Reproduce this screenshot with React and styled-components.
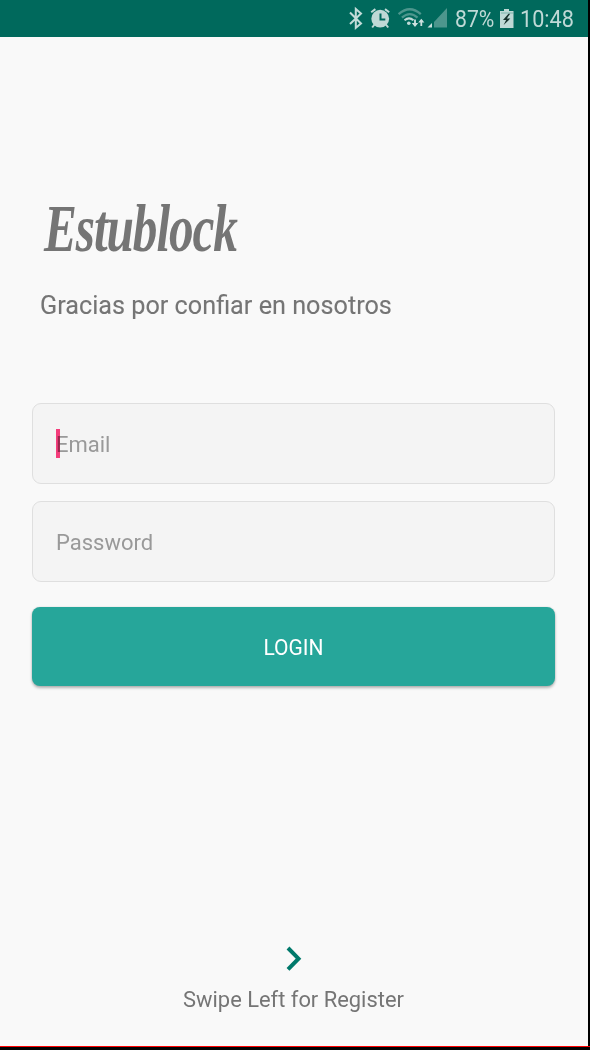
import React from "react";
import styled, { createGlobalStyle } from "styled-components";

const GlobalStyle = createGlobalStyle`
  * { box-sizing: border-box; }
  body { margin: 0; background: #000; font-family: Roboto, "Liberation Sans", sans-serif; }
`;

const Frame = styled.div`
  width: 590px;
  height: 1050px;
  background: #000;
  overflow: hidden;
`;

const Screen = styled.div`
  width: 588px;
  height: 1046px;
  background: #f9f9f9;
  display: flex;
  flex-direction: column;
`;

const BottomEdge = styled.div`
  height: 1px;
  background: #f00;
`;

const StatusBar = styled.header`
  height: 37px;
  flex: none;
  background: #00695c;
  color: #bfd9d6;
  display: flex;
  justify-content: flex-end;
`;

const StatusIcons = styled.svg`
  flex: none;
  display: block;
`;

const StatusText = styled.span`
  width: ${(p) => p.$width}px;
  font-size: 24.5px;
  line-height: 37px;
  white-space: nowrap;
  transform: scaleX(${(p) => p.$stretch});
  transform-origin: left;
`;

const Main = styled.main`
  flex: 1;
  display: flex;
  flex-direction: column;
  padding: 154px 33px 0 32px;
`;

const Brand = styled.h1`
  margin: 0 0 0 12px;
  height: 74px;
  width: max-content;
  font: italic 700 68px/74px "Liberation Serif", cursive;
  letter-spacing: -1.5px;
  color: #757575;
  transform: scaleX(${(p) => p.$stretch});
  transform-origin: left;
`;

const Tagline = styled.p`
  margin: 22px 0 0 8px;
  height: 36px;
  width: max-content;
  font-size: 26px;
  line-height: 36px;
  color: #757575;
  -webkit-text-stroke: 0.12px #757575;
  transform: scaleX(0.97);
  transform-origin: left;
`;

const Form = styled.form`
  margin-top: 80px;
  display: flex;
  flex-direction: column;
`;

const Field = styled.div`
  position: relative;
  height: 81px;
  margin-bottom: 17px;
  border: 1.5px solid #dfdfdf;
  border-radius: 9px;
  background: #f4f4f4;
  display: flex;
`;

const Input = styled.input`
  flex: 1;
  min-width: 0;
  padding: 2px 23px 0;
  border: 0;
  outline: 0;
  background: transparent;
  font: 22px Roboto, sans-serif;
  &::placeholder { color: #999; opacity: 1; }
`;

const Caret = styled.span`
  position: absolute;
  left: 23px;
  top: 25px;
  width: 4px;
  height: 29px;
  background: #ff4081;
  mix-blend-mode: multiply;
`;

const LoginButton = styled.button`
  height: 79px;
  margin-top: 8px;
  padding: 2px 0 0;
  border: 0;
  border-radius: 8px;
  background: #26a69a;
  color: #fff;
  font: 22px Roboto, sans-serif;
  box-shadow: 0 2px 3px rgba(0, 0, 0, 0.28), 0 0 2px rgba(0, 0, 0, 0.12);
`;

const ButtonLabel = styled.span`
  display: inline-block;
  transform: scaleX(0.955);
`;

const Footer = styled.footer`
  margin-top: auto;
  height: 101px;
  display: flex;
  flex-direction: column;
  align-items: center;
`;

const Chevron = styled.svg`
  display: block;
`;

const Hint = styled.span`
  margin-top: 13px;
  font-size: 21.9px;
  line-height: 30px;
  color: #757575;
`;

export default function App() {
  return (
    <Frame>
      <GlobalStyle />
      <Screen>
        <StatusBar>
          <StatusIcons width="107" height="37" viewBox="348 0 107 37" fill="none">
            <path d="M350 12.5l11 11-5.2 4.3V9l5.2 4.5-11 10.5" stroke="#c2dbd8" strokeWidth="2" />
            <circle cx="380.2" cy="18.7" r="8.9" fill="#bfd9d6" />
            <path d="M371.2 12.3l4.2-3.2M389.2 12.3l-4.2-3.2M374.5 24.5l-2.3 3M385.9 24.5l2.3 3" stroke="#bfd9d6" strokeWidth="2" />
            <path d="M380.5 13.5v6h4.8" stroke="#00695c" strokeWidth="2" />
            <path d="M398.6 14.2q11.2-10 22.2 0M401.9 17.6q8-7 15.6 0" stroke="#4d968d" strokeWidth="2.3" />
            <path d="M404.5 20.3q4.5-3.8 9 0" stroke="#bfd9d6" strokeWidth="2" />
            <circle cx="408.8" cy="23.2" r="1.8" fill="#bfd9d6" />
            <path d="M415 19.5v6M421.3 20v6" stroke="#cce1df" strokeWidth="1.8" />
            <path d="M411.8 23h6.4l-3.2 4zM418.2 22.5h6.2l-3.1-3.8z" fill="#cce1df" />
            <path d="M447 8v19.5h-13V22z" fill="#4d968d" />
            <path d="M432 23v4.5h-4.5z" fill="#cce1df" />
          </StatusIcons>
          <StatusText $width={44} $stretch={0.865}>87%</StatusText>
          <StatusIcons width="21" height="37" viewBox="499 0 21 37">
            <path d="M504 9h5v2h4.5v17h-13.5V11h4z" fill="#bfd9d6" />
            <path d="M501 13h12" stroke="#7fb4ad" />
            <path d="M508.5 13.7l-5.5 6.2h3.1l-2.5 5.2 6.7-6.5h-3.4l3.2-4.9z" fill="#17312d" />
          </StatusIcons>
          <StatusText $width={68} $stretch={0.885}>10:48</StatusText>
        </StatusBar>
        <Main>
          <Brand $stretch={0.725}>Estublock</Brand>
          <Tagline>Gracias por confiar en nosotros</Tagline>
          <Form onSubmit={(e) => e.preventDefault()}>
            <Field>
              <Input type="email" placeholder="Email" />
              <Caret />
            </Field>
            <Field>
              <Input type="password" placeholder="Password" />
            </Field>
            <LoginButton type="submit">
              <ButtonLabel>LOGIN</ButtonLabel>
            </LoginButton>
          </Form>
          <Footer>
            <Chevron width="18" height="27" viewBox="0 0 18 27" fill="none">
              <path d="M3 3l10.5 10.7L3 24.4" stroke="#00796b" strokeWidth="4" />
            </Chevron>
            <Hint>Swipe Left for Register</Hint>
          </Footer>
        </Main>
      </Screen>
      <BottomEdge />
    </Frame>
  );
}
